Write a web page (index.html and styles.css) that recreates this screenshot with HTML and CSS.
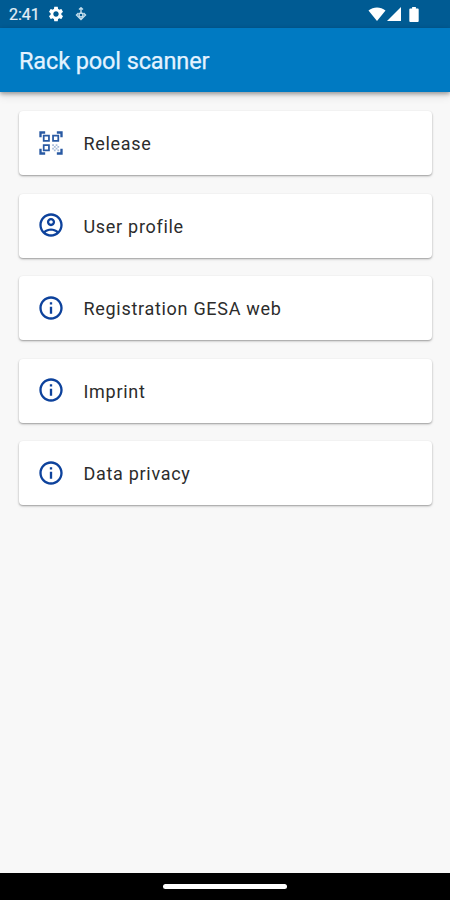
FILE: index.html
```html
<!DOCTYPE html>
<html lang="en">
<head>
<meta charset="utf-8">
<title>Rack pool scanner</title>
<link rel="stylesheet" href="styles.css">
</head>
<body>
<svg class="defs" aria-hidden="true">
  <symbol id="info" viewBox="0 0 24 24"><path d="M11 7h2v2h-2zm0 4h2v6h-2zm1-9C6.480 2 2 6.480 2 12s4.480 10 10 10 10-4.480 10-10S17.520 2 12 2zm0 18c-4.410 0-8-3.590-8-8s3.590-8 8-8 8 3.590 8 8-3.590 8-8 8z"/></symbol>
</svg>
<div class="status">
  <div class="status-group">
    <span class="clock">2:41</span>
    <svg class="gear" viewBox="0 0 24 24"><path d="M19.140 12.940c.04-.3.060-.610.060-.940 0-.32-.020-.640-.070-.940l2.030-1.580c.18-.14.230-.410.120-.610l-1.920-3.320c-.12-.22-.370-.290-.590-.220l-2.390.960c-.5-.38-1.030-.7-1.620-.940l-.360-2.540c-.04-.24-.240-.410-.480-.410h-3.840c-.24 0-.430.170-.470.410l-.360 2.540c-.590.240-1.130.570-1.620.940l-2.390-.960c-.22-.08-.470 0-.590.220L2.740 8.870c-.12.210-.080.470.120.610l2.030 1.580c-.05.300-.090.630-.090.940s.02.640.070.940l-2.030 1.580c-.18.140-.230.410-.120.610l1.920 3.320c.12.220.370.290.590.220l2.390-.960c.5.380 1.030.7 1.620.940l.360 2.540c.05.240.240.410.480.410h3.840c.24 0 .440-.170.470-.410l.360-2.540c.590-.24 1.130-.560 1.620-.940l2.390.960c.22.080.470 0 .590-.220l1.920-3.320c.12-.22.070-.470-.120-.610l-2.010-1.580zM12 15.600c-1.980 0-3.600-1.620-3.600-3.600s1.620-3.600 3.600-3.600 3.600 1.620 3.600 3.600-1.620 3.600-3.600 3.600z"/></svg>
    <svg class="debug" viewBox="0 0 12 14"><path d="M6 1v6M4 2.600 6 .8l2 1.800M3.500 6 1.500 8 6 12.500 10.500 8l-2-2"/><circle cx="6" cy="8" r="2"/></svg>
  </div>
  <div class="status-group signals">
    <svg class="wifi" viewBox="0 0 18 14"><path d="M.5 3.600C5.500-.6 12.500-.6 17.500 3.600L9 14z"/></svg>
    <svg class="cell" viewBox="0 0 14 14"><path d="M14 0v14H0z"/></svg>
    <svg class="battery" viewBox="0 0 10 16"><path d="M3 0h4v1.700h2q1 0 1 1V15q0 1-1 1H1q-1 0-1-1V2.700q0-1 1-1h2z"/></svg>
  </div>
</div>
<header class="appbar"><h1>Rack pool scanner</h1></header>
<main class="list">
  <a class="card">
    <svg class="icon qr" viewBox="0 0 24 24"><path d="M9.500 6.500v3h-3v-3h3M11 5H5v6h6V5zm-1.500 9.500v3h-3v-3h3M11 13H5v6h6v-6zm6.500-6.500v3h-3v-3h3M19 5h-6v6h6V5z"/><path d="M22 7h-2V4h-3V2h5v5zm0 15v-5h-2v3h-3v2h5zM2 22h5v-2H4v-3H2v5zM2 2v5h2V4h3V2H2z"/><path class="faint" d="M13 13h1.500v1.500H13zm1.500 1.500H16V16h-1.500zM16 13h1.500v1.500H16zm-3 3h1.500v1.500H13zm1.500 1.500H16V19h-1.500zM16 16h1.500v1.500H16zm1.500-1.500H19V16h-1.500zm0 3H19V19h-1.500z"/></svg>
    <span>Release</span>
  </a>
  <a class="card">
    <svg class="icon" viewBox="0 0 24 24"><path d="M12 2C6.480 2 2 6.480 2 12s4.480 10 10 10 10-4.480 10-10S17.520 2 12 2zM7.350 18.500C8.660 17.560 10.260 17 12 17s3.340.560 4.650 1.500C15.340 19.440 13.740 20 12 20s-3.340-.560-4.650-1.500zm10.790-1.380C16.450 15.800 14.320 15 12 15s-4.450.8-6.140 2.120C4.700 15.730 4 13.950 4 12c0-4.420 3.580-8 8-8s8 3.580 8 8c0 1.950-.7 3.730-1.860 5.120z"/><path d="M12 6c-1.930 0-3.500 1.570-3.500 3.500S10.070 13 12 13s3.500-1.570 3.500-3.500S13.930 6 12 6zm0 5c-.830 0-1.500-.670-1.500-1.500S11.170 8 12 8s1.500.670 1.500 1.500S12.830 11 12 11z"/></svg>
    <span>User profile</span>
  </a>
  <a class="card"><svg class="icon"><use href="#info"/></svg><span>Registration GESA web</span></a>
  <a class="card"><svg class="icon"><use href="#info"/></svg><span>Imprint</span></a>
  <a class="card"><svg class="icon"><use href="#info"/></svg><span>Data privacy</span></a>
</main>
<footer class="navbar"><div class="handle"></div></footer>
</body>
</html>
```
FILE: styles.css
```css
* { box-sizing: border-box; }
body {
  margin: 0;
  height: 900px;
  display: flex;
  flex-direction: column;
  background: #f8f8f8;
  font-family: Roboto, sans-serif;
  overflow: hidden;
}
.defs { display: none; }
svg { display: block; flex: none; }
.status {
  height: 28px;
  flex: none;
  display: flex;
  justify-content: space-between;
  align-items: center;
  padding: 0 31px 0 9px;
  background: #005b93;
  color: #e4eff7;
  fill: #fff;
}
.status-group { display: flex; align-items: center; }
.clock { width: 38px; font-size: 16px; line-height: 28px; padding-top: 2px; font-weight: 400; -webkit-text-stroke: 0.2px #e4eff7; }
.gear { width: 18px; height: 18px; }
.debug { width: 12px; height: 14px; margin-left: 10px; fill: none; stroke: #c5dfed; stroke-width: 1.4; }
.wifi { width: 18px; height: 14px; }
.cell { width: 14px; height: 14px; margin-left: 1px; }
.battery { width: 10px; height: 15px; margin-left: 8px; }
.appbar {
  height: 64px;
  flex: none;
  display: flex;
  align-items: center;
  padding: 1px 19px 0;
  background: #007ac2;
  color: #e4f3ff;
  box-shadow: 0 2px 4px rgba(0, 0, 0, .32), 0 4px 9px rgba(0, 0, 0, .1);
}
h1 { margin: 0; font-size: 23.500px; font-weight: 400; line-height: 30px; letter-spacing: -0.12px; -webkit-text-stroke: 0.25px #e4f3ff; }
.list {
  flex: 1;
  display: flex;
  flex-direction: column;
  gap: 18.500px;
  padding: 19px 18px 0 19px;
}
.card {
  height: 64px;
  display: flex;
  align-items: center;
  padding: 0 17.500px;
  border-radius: 4px;
  background: #fff;
  color: #2c2c2c;
  font-size: 18px;
  letter-spacing: 0.7px;
  box-shadow: 0 1px 2px rgba(0, 0, 0, .36), 0 2px 4px rgba(0, 0, 0, .04);
}
.card span { margin-left: 19px; padding-top: 1px; }
.icon { width: 28px; height: 28px; margin-top: -1px; fill: #0d429c; }
.qr { fill: #2859a3; }
.faint { opacity: .4; }
.navbar {
  height: 27px;
  flex: none;
  display: flex;
  justify-content: center;
  align-items: center;
  background: #000;
}
.handle { width: 124px; height: 5px; border-radius: 3px; background: #fff; }
```
